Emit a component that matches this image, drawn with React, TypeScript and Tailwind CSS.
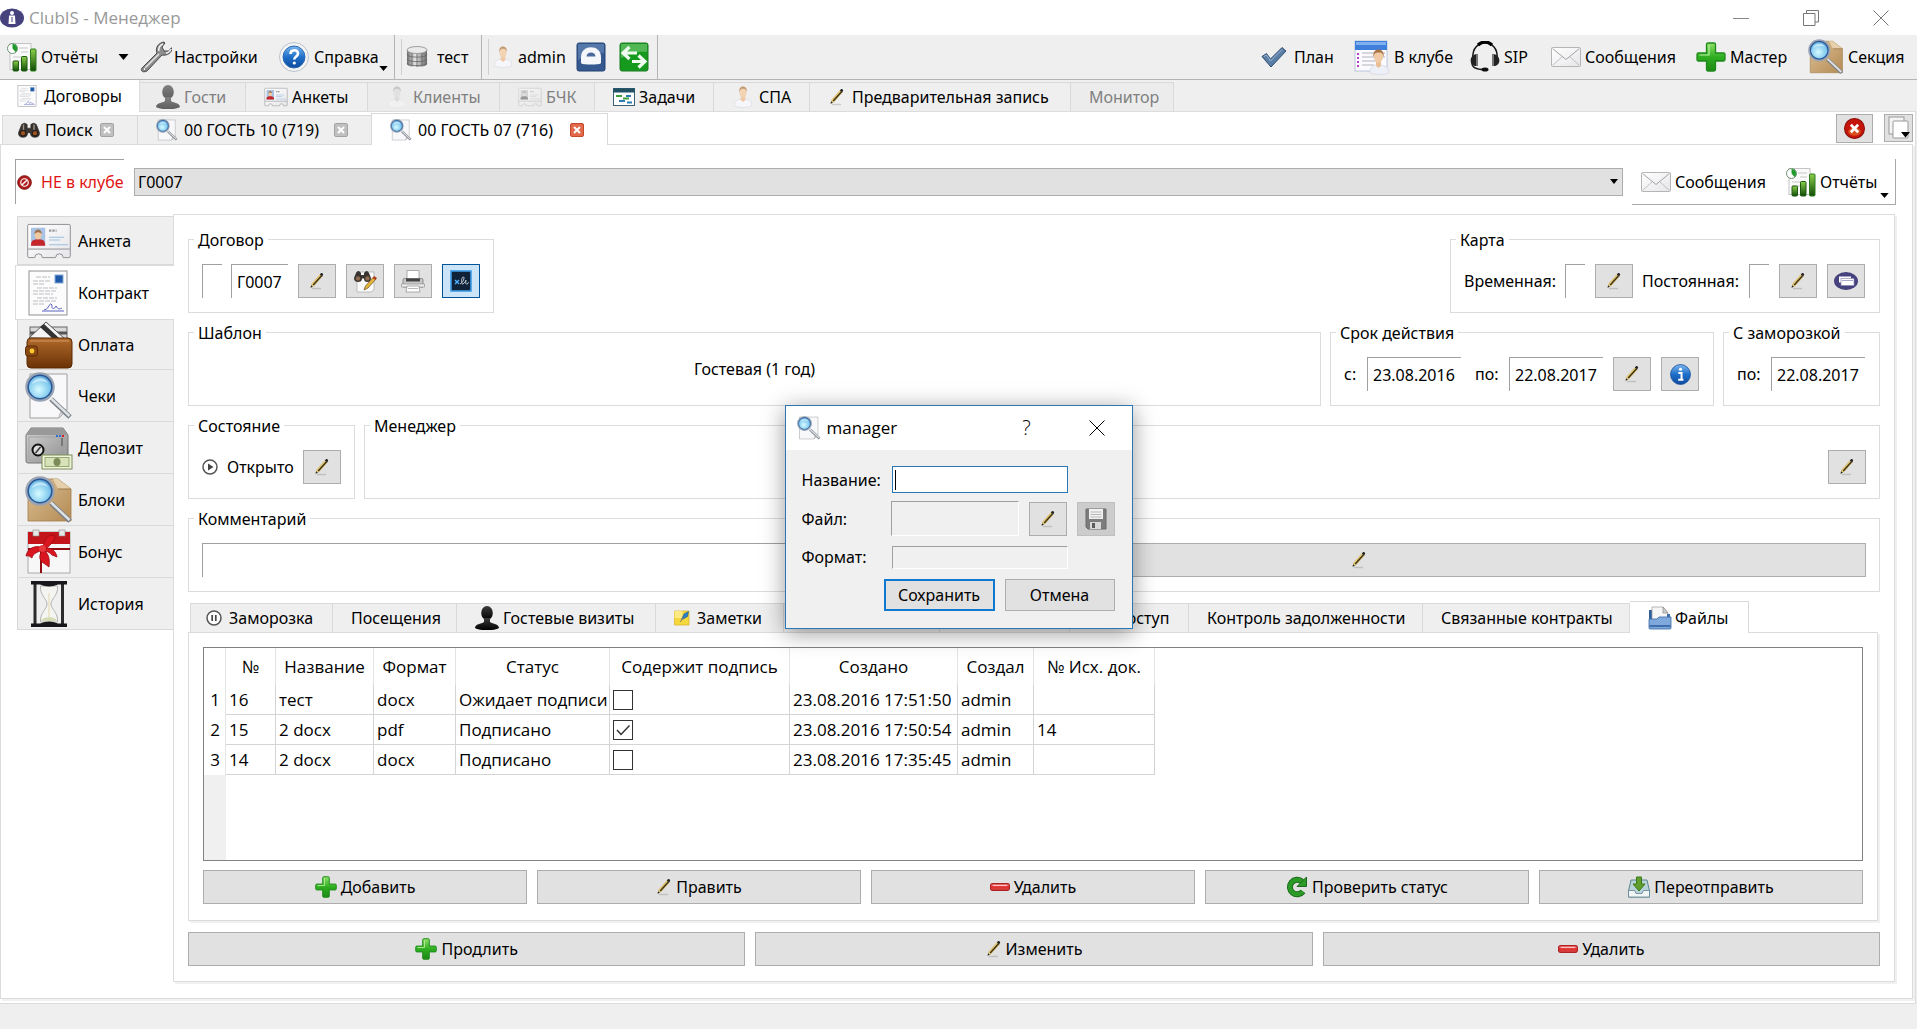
import React from "react";

type IconProps = { className?: string };

/* ---------- icons ---------- */

function Defs() {
  return (
    <svg className="absolute h-0 w-0" aria-hidden="true">
      <defs>
        <linearGradient id="gGreen" x1="0" y1="0" x2="0" y2="1">
          <stop offset="0" stopColor="#8fe06a" />
          <stop offset="0.5" stopColor="#2fae22" />
          <stop offset="1" stopColor="#1d8a14" />
        </linearGradient>
        <linearGradient id="gBar" x1="0" y1="0" x2="0" y2="1">
          <stop offset="0" stopColor="#8ccf4a" />
          <stop offset="1" stopColor="#0f4a08" />
        </linearGradient>
        <linearGradient id="gRed" x1="0" y1="0" x2="0" y2="1">
          <stop offset="0" stopColor="#f59a9a" />
          <stop offset="0.5" stopColor="#e02f2f" />
          <stop offset="1" stopColor="#d84a4a" />
        </linearGradient>
        <linearGradient id="gBlue" x1="0" y1="0" x2="0" y2="1">
          <stop offset="0" stopColor="#7db7ee" />
          <stop offset="0.5" stopColor="#1f6fc9" />
          <stop offset="1" stopColor="#0d4a9e" />
        </linearGradient>
        <linearGradient id="gPaper" x1="0" y1="0" x2="1" y2="1">
          <stop offset="0" stopColor="#ffffff" />
          <stop offset="1" stopColor="#e6e6ea" />
        </linearGradient>
        <linearGradient id="gMetal" x1="0" y1="0" x2="1" y2="0">
          <stop offset="0" stopColor="#6f6f6f" />
          <stop offset="0.4" stopColor="#e4e4e4" />
          <stop offset="1" stopColor="#6a6a6a" />
        </linearGradient>
        <radialGradient id="gLens" cx="0.45" cy="0.6" r="0.7">
          <stop offset="0" stopColor="#d6fbff" />
          <stop offset="0.6" stopColor="#7cc6ee" />
          <stop offset="1" stopColor="#2c62a6" />
        </radialGradient>
        <linearGradient id="gBox" x1="0" y1="0" x2="1" y2="1">
          <stop offset="0" stopColor="#dcc096" />
          <stop offset="1" stopColor="#b48b54" />
        </linearGradient>
        <linearGradient id="gWallet" x1="0" y1="0" x2="0" y2="1">
          <stop offset="0" stopColor="#b06a2c" />
          <stop offset="1" stopColor="#6b3205" />
        </linearGradient>
        <linearGradient id="gSafe" x1="0" y1="0" x2="1" y2="1">
          <stop offset="0" stopColor="#d2d2d2" />
          <stop offset="1" stopColor="#8e8e8e" />
        </linearGradient>
        <linearGradient id="gGuest" x1="0" y1="0" x2="0" y2="1">
          <stop offset="0" stopColor="#3a3a3a" />
          <stop offset="1" stopColor="#000000" />
        </linearGradient>
      </defs>
    </svg>
  );
}

function AppIcon({ className }: IconProps) {
  return (
    <svg viewBox="0 0 24 20" className={className}>
      <ellipse cx="12" cy="10" rx="12" ry="9.5" fill="#45427e" />
      <circle cx="12" cy="5" r="2" fill="#fff" />
      <path d="M9 7.5h6l0.500 8.500H8.500z" fill="#fff" />
      <path d="M12 9v5" stroke="#45427e" />
    </svg>
  );
}
function ReportsIcon({ className }: IconProps) {
  return (
    <svg viewBox="0 0 30 30" className={className}>
      <rect x="3" y="1.5" width="21" height="26" fill="#fafafa" stroke="#c4c4c4" />
      <path d="M12 6h9M14 10h7M6 15h13M6 19h8M6 23h6" stroke="#c8c8c8" strokeWidth="1.2" />
      <circle cx="5.5" cy="6.5" r="5" fill="#fff" stroke="#6f8f6f" />
      <path d="M5.5 6.5V2a4.500 4.500 0 0 1 3 8z" fill="#1f9a2c" />
      <rect x="6" y="19" width="5.5" height="10" rx="1" fill="url(#gBar)" stroke="#1c5a10" />
      <rect x="14.5" y="14.5" width="5.5" height="14.5" rx="1" fill="url(#gBar)" stroke="#1c5a10" />
      <rect x="23.5" y="7" width="5.5" height="22" rx="1" fill="url(#gBar)" stroke="#2c7a18" />
    </svg>
  );
}
function WrenchIcon({ className }: IconProps) {
  return (
    <svg viewBox="0 0 32 32" className={className}>
      <path d="M2 27 17 12c-2-5 1-10 7-11l1 1-3 4 2 4h5l2-3 1 0c0 5-5 8-10 7L7 30c-4 2-7 0-5-3z" fill="#8d8d8d" stroke="#4a4a4a" strokeWidth="1" />
      <path d="M5 27 19 13" stroke="#e8e8e8" strokeWidth="1.5" />
      <path d="M19 10c-1-3 1-6 4-7M26 12c2 0 4-2 5-4" stroke="#f2f2f2" strokeWidth="1.5" fill="none" />
      <circle cx="4.5" cy="28" r="1.3" fill="#fff" stroke="#444" strokeWidth="0.5" />
    </svg>
  );
}
function HelpIcon({ className }: IconProps) {
  return (
    <svg viewBox="0 0 30 30" className={className}>
      <circle cx="15" cy="15" r="14.5" fill="#f4f4f4" stroke="#b9c2cc" />
      <circle cx="15" cy="15" r="11" fill="url(#gBlue)" stroke="#2d6db8" />
      <path d="M11.500 12c0-5 7.500-5 7.500-0.500 0 3-3.700 3-3.700 6" fill="none" stroke="#fff" strokeWidth="2.6" />
      <circle cx="15.3" cy="21" r="1.6" fill="#fff" />
    </svg>
  );
}
function DbIcon({ className }: IconProps) {
  return (
    <svg viewBox="0 0 22 22" className={className}>
      <path d="M1 4v14c0 4 20 4 20 0V4z" fill="url(#gMetal)" />
      <ellipse cx="11" cy="4" rx="10" ry="3.5" fill="#e9e9e9" stroke="#8b8b8b" strokeWidth="0.8" />
      <path d="M1 8.500c0 3.500 20 3.500 20 0M1 13c0 3.500 20 3.500 20 0M1 17c0 3.500 20 3.500 20 0M6 7v13M11 8v13M16 7v13" fill="none" stroke="#666" strokeWidth="0.8" />
    </svg>
  );
}
function PersonIcon({ className }: IconProps) {
  return (
    <svg viewBox="0 0 18 22" className={className}>
      <path d="M0.500 20c-1-5 3-6 6-7h5c3 1 7 2 6 7-4 2-13 2-17 0z" fill="#f6f7fb" stroke="#dcdde6" strokeWidth="0.8" />
      <path d="M7 10h4l0.500 4L9 16l-2.500-2z" fill="#eec9a4" />
      <ellipse cx="9" cy="6.500" rx="3.600" ry="5" fill="#f3d4b2" />
      <path d="M5.200 6c-0.500-4 1.800-5.500 3.800-5.500s4.300 1.500 3.800 5.500c-1-3-2-3.300-3.800-3.300S6.200 3 5.200 6z" fill="#c09a74" />
    </svg>
  );
}
function LockIcon({ className }: IconProps) {
  return (
    <svg viewBox="0 0 30 30" className={className}>
      <rect x="1" y="1" width="28" height="28" rx="2" fill="#35588f" stroke="#234274" />
      <path d="M2 2h26v9C18 10 10 12 2 18z" fill="#6585b5" opacity="0.7" />
      <path d="M5 21v-6C5 2 25 2 25 15v6c0 2-20 2-20 0z" fill="#f4f6fa" />
      <path d="M10.500 14.500c0-5.500 9-5.500 9 0z" fill="#4a6a9f" />
    </svg>
  );
}
function SwapIcon({ className }: IconProps) {
  return (
    <svg viewBox="0 0 30 30" className={className}>
      <rect x="1" y="1" width="28" height="28" rx="2" fill="#169a1e" stroke="#1c7a22" />
      <path d="M2 2h26v8C18 9 10 12 2 16z" fill="#6cc36c" opacity="0.7" />
      <path d="M10.500 5 4 11l6.500 6M4.500 11H18M19.500 13.500 26 19.500l-6.500 6M25.500 19.500H13" fill="none" stroke="#f0fbf0" strokeWidth="3.200" />
    </svg>
  );
}
function CheckIcon({ className }: IconProps) {
  return (
    <svg viewBox="0 0 26 22" className={className}>
      <path d="M1 10.500 5.500 7.500 9.500 13 21 1.500 25 5 10 21z" fill="#5b7ea6" stroke="#33506f" />
      <path d="M3 10.500 5.500 9 9.500 15 21 3.500" fill="none" stroke="#9ab6d2" />
    </svg>
  );
}
function InClubIcon({ className }: IconProps) {
  return (
    <svg viewBox="0 0 36 36" className={className}>
      <rect x="1" y="2" width="32" height="30" fill="#fbfbff" stroke="#b9c4dd" />
      <rect x="1" y="2" width="32" height="9" fill="#3f7fdc" />
      <path d="M2 3h30v3H2z" fill="#7fb0f2" />
      <path d="M8 14h23M8 18h23M8 22h14M8 26h12" stroke="#b0b0b8" />
      <path d="M4 14v2M4 18v2M4 22v2M4 26v2" stroke="#b240c0" strokeWidth="2" />
      <path d="M16 34c-1-6 3-7 6-8h5c4 1 8 2 8 8-4 2-15 2-19 0z" fill="#eef0f7" stroke="#d2d4de" strokeWidth="0.7" />
      <path d="M22 22h5v5l-2.500 2-2.500-2z" fill="#e9bf97" />
      <ellipse cx="24.5" cy="17.5" rx="4.6" ry="6" fill="#f0cba6" />
      <path d="M19.500 18c-1-5 2-7.500 5-7.500s6 2.500 5 7.500c-1-4-2-4.500-5-4.500s-4 0.500-5 4.500z" fill="#a87445" />
    </svg>
  );
}
function HeadsetIcon({ className }: IconProps) {
  return (
    <svg viewBox="0 0 32 32" className={className}>
      <path d="M4 17C2 -3 30 -3 28 17" fill="none" stroke="#111" strokeWidth="1.500" />
      <path d="M9 4c4-4 10-4 14 0" fill="none" stroke="#000" strokeWidth="3.200" />
      <path d="M8 13v12c-8 1-9-11 0-12zM24 13v12c8 1 9-11 0-12z" fill="#222" />
      <path d="M8 13v12M24 13v12" stroke="#777" strokeWidth="2" />
      <path d="M3 22c0 5 6 6.500 12 6.500" fill="none" stroke="#222" strokeWidth="1.5" />
      <ellipse cx="16" cy="28.500" rx="3.5" ry="2" fill="#111" />
    </svg>
  );
}
function MailIcon({ className }: IconProps) {
  return (
    <svg viewBox="0 0 30 20" className={className}>
      <rect x="0.5" y="0.5" width="29" height="19" rx="1" fill="url(#gPaper)" stroke="#b5b5b5" />
      <path d="M1.500 18.500 11.500 9.500M28.500 18.500 18.500 9.500" stroke="#c0c0c0" fill="none" />
      <path d="M1.500 1.500 15 12.500 28.500 1.500" stroke="#a4a4a8" fill="none" />
    </svg>
  );
}
function PlusIcon({ className }: IconProps) {
  return (
    <svg viewBox="0 0 30 30" className={className}>
      <path d="M12 1h6q1.500 0 1.500 1.500V11H27.500Q29 11 29 12.500v5Q29 19 27.500 19H19.500v8.500q0 1.500-1.500 1.500h-6q-1.500 0-1.500-1.500V19H2.500Q1 19 1 17.500v-5Q1 11 2.500 11h8V2.500Q10.500 1 12 1z" fill="url(#gGreen)" stroke="#1d8a1a" strokeWidth="1.3" />
      <path d="M13 3v10H3.500" fill="none" stroke="#b6f09c" strokeWidth="1.2" />
    </svg>
  );
}
function MinusIcon({ className }: IconProps) {
  return (
    <svg viewBox="0 0 20 8" className={className}>
      <rect x="0.600" y="0.600" width="18.800" height="6.800" rx="1.800" fill="url(#gRed)" stroke="#b02222" strokeWidth="1.200" />
      <path d="M3 2.500h14" stroke="#ffc0c0" />
    </svg>
  );
}
function Lens() {
  return (
    <>
      <path d="M26 27 45 45" stroke="#7a8088" strokeWidth="5" />
      <path d="M26 26.500 44.500 44" stroke="#dfe2e5" strokeWidth="2.500" />
      <circle cx="15" cy="15" r="13.500" fill="url(#gLens)" stroke="#98a4b4" strokeWidth="2.500" />
      <circle cx="15" cy="15" r="11.800" fill="none" stroke="#2b5694" strokeWidth="1.500" />
      <path d="M7 12C9 5 20 4 23 11 18 8 12 9 7 12z" fill="#e8f7ff" opacity="0.600" />
    </>
  );
}
function BoxSearchIcon({ className }: IconProps) {
  return (
    <svg viewBox="0 0 48 48" className={className}>
      <path d="M7 3h26l13 10v32H3V13z" fill="url(#gBox)" stroke="#a37f4d" strokeWidth="0.8" />
      <path d="M28 3h5l13 10H33z" fill="#e6d0ab" />
      <path d="M33 13h13" stroke="#9b7646" />
      <Lens />
    </svg>
  );
}
function PageSearchIcon({ className }: IconProps) {
  return (
    <svg viewBox="0 0 48 48" className={className}>
      <path d="M5 2h37v36l-8 8H5z" fill="#f8f8fa" stroke="#a0a0a4" />
      <path d="M42 38c-4-1-8 2-8 8z" fill="#d6d6da" stroke="#a8a8ac" strokeWidth="0.7" />
      <Lens />
    </svg>
  );
}
function DocIcon({ className }: IconProps) {
  return (
    <svg viewBox="0 0 40 46" className={className}>
      <rect x="1" y="1" width="38" height="44" fill="#fcfcfd" stroke="#8f8f94" />
      <rect x="27" y="5" width="8" height="8" fill="#1f5aa8" stroke="#86a8d6" />
      <path d="M8 7h14M5 11h18M5 14h12M9 18h20M5 21h24M5 24h20M9 28h20M5 31h24M5 34h12" stroke="#b6b6ba" strokeWidth="0.9" strokeDasharray="5 1" />
      <path d="M14 41h22M16 40c6-1 5-9 8-5-1 5 3 4 4 1 2 4 4 3 6 2" fill="none" stroke="#5a62c0" strokeWidth="1" />
    </svg>
  );
}
function CardIcon({ className }: IconProps) {
  return (
    <svg viewBox="0 0 48 38" className={className}>
      <path d="M3 1.500h42q1.500 0 1.500 1.500v32q0 1.500-1.500 1.500h-6q0-4-4-4t-4 4H17q0-4-4-4t-4 4H3q-1.500 0-1.500-1.500V3q0-1.500 1.500-1.500z" fill="url(#gPaper)" stroke="#8d8d92" />
      <rect x="5" y="5" width="15" height="19" fill="#a9c3e6" />
      <path d="M5 24c0-7 4-6 7.500-7 4 1 7.500 0 7.500 7z" fill="#c4262b" />
      <ellipse cx="12.500" cy="12.500" rx="3.600" ry="5" fill="#efc9a2" />
      <path d="M8.500 12c0-7 8-7 8 0-2-3-6-3-8 0z" fill="#9d7450" />
      <path d="M24 8h8" stroke="#9a9a9a" strokeWidth="2.5" strokeDasharray="2.5 1" />
      <path d="M24 15h16M24 18h12M24 23h20" stroke="#9dbfdf" strokeWidth="1.2" />
      <path d="M2 27.500h44" stroke="#8d8d92" />
    </svg>
  );
}
function WalletIcon({ className }: IconProps) {
  return (
    <svg viewBox="0 0 48 48" className={className}>
      <rect x="5" y="6" width="37" height="14" fill="#d9d9d9" stroke="#666" />
      <path d="M5 12h37" stroke="#555" strokeWidth="3" />
      <path d="M4 17 21 1 40 18z" fill="#f4f4f4" stroke="#555" />
      <path d="M15 6 27 17h7L19 3z" fill="#333" />
      <path d="M6 17q-4 0-4 4v22q0 4 4 4h37q4 0 4-4V21q0-4-4-4z" fill="url(#gWallet)" stroke="#5a2a05" />
      <path d="M5 20h39" stroke="#d49a62" />
      <rect x="0.500" y="25" width="12" height="10" rx="2.500" fill="#8a4812" stroke="#5a2a05" />
      <circle cx="7" cy="30" r="2.400" fill="#f7cb2e" />
    </svg>
  );
}
function SafeIcon({ className }: IconProps) {
  return (
    <svg viewBox="0 0 48 48" className={className}>
      <path d="M6 4h32l5 7v26q0 2-2 2H3q-2 0-2-2V11z" fill="url(#gSafe)" stroke="#777" />
      <path d="M6 4h32l5 7H1z" fill="#999" />
      <rect x="4" y="13" width="36" height="23" fill="none" stroke="#a4a4a4" />
      <path d="M31 12h2M34 12h2" stroke="#2d6fd2" strokeWidth="2" />
      <path d="M37 12h2" stroke="#d22" strokeWidth="2" />
      <circle cx="13" cy="26" r="5.500" fill="#ddd" stroke="#111" strokeWidth="2" />
      <path d="M10.500 29 15.500 23" stroke="#333" strokeWidth="1.500" />
      <path d="M37 14v8" stroke="#777" strokeWidth="2" />
      <rect x="17" y="31" width="30" height="14" fill="#eef4da" stroke="#7c8c58" />
      <rect x="20" y="33.500" width="24" height="9" fill="#d8e2b8" stroke="#98a874" />
      <ellipse cx="32" cy="38" rx="3.500" ry="4" fill="#7c8c58" />
    </svg>
  );
}
function BonusIcon({ className }: IconProps) {
  return (
    <svg viewBox="0 0 48 48" className={className}>
      <rect x="3" y="4" width="42" height="41" fill="#f7f7f7" stroke="#aaa" />
      <rect x="3" y="4" width="42" height="12" fill="#c4141b" />
      <path d="M3 21h42M16 21v24" stroke="#8e0c12" strokeWidth="2" />
      <rect x="8" y="2" width="6" height="6" fill="#e6e6e6" stroke="#888" strokeWidth="0.6" />
      <rect x="34" y="2" width="6" height="6" fill="#e6e6e6" stroke="#888" strokeWidth="0.6" />
      <path d="M18 20C10 16 2 21 1 28c3-1 4 1 6 2 1-5 6-6 11-8zM18 20c1-9 6-15 12-12-1 5-5 11-12 14zM18 21c6-3 13 1 14 8l-5-2c-3-3-5-4-9-4zM18 21c6 5 7 10 6 18l-4-3c-6-3-7-8-2-15z" fill="#d9161f" stroke="#9b0c13" strokeWidth="0.8" />
      <circle cx="17.500" cy="20.500" r="3.500" fill="#e8373d" />
    </svg>
  );
}
function HourglassIcon({ className }: IconProps) {
  return (
    <svg viewBox="0 0 36 46" className={className}>
      <path d="M4 2v42M31.500 2v42" stroke="#2b2b2b" strokeWidth="3" />
      <path d="M9.500 5c-1 9 6.500 13 6.500 18s-7.500 9-6.500 18h17c1-9-6.500-13-6.500-18s7.500-9 6.500-18z" fill="#f4f4f0" stroke="#b4b4b4" />
      <path d="M18 12v26" stroke="#e4d6b0" />
      <path d="M10 40c2-5 14-5 16 0z" fill="#d5dbb4" />
      <path d="M0 0h36v3.500H27q-9 4-18 0H0zM0 46h36v-3.500H27q-9-4-18 0H0z" fill="#17171c" />
    </svg>
  );
}
function GuestIcon({ className }: IconProps) {
  return (
    <svg viewBox="0 0 24 24" className={className}>
      <ellipse cx="12" cy="7" rx="5.800" ry="7" fill="url(#gGuest)" />
      <path d="M9 12h6v4c3 2 9 2 9 6-5 3-19 3-24 0 0-4 6-4 9-6z" fill="url(#gGuest)" />
    </svg>
  );
}
function TasksIcon({ className }: IconProps) {
  return (
    <svg viewBox="0 0 22 18" className={className}>
      <rect x="0.500" y="0.500" width="21" height="17" fill="#fff" stroke="#3b5f73" />
      <rect x="0.500" y="0.500" width="21" height="4" fill="#1f5063" />
      <path d="M3 8h6M10 10.500h6" stroke="#3fa03a" strokeWidth="2" />
      <path d="M6 13h6M13 8h5M14 14.500h5" stroke="#2a7fb0" strokeWidth="1.800" />
    </svg>
  );
}
function PencilIcon({ className }: IconProps) {
  return (
    <svg viewBox="0 0 16 18" className={className}>
      <path d="M3 16.500h9" stroke="#000" strokeOpacity="0.150" strokeWidth="1.400" />
      <path d="M2 15 3 11.500 11 2.500l2.200 2L5.300 13.500z" fill="#f0d277" stroke="#c4a654" strokeWidth="0.500" />
      <path d="M4.200 13 12.500 3.800" stroke="#3d3212" strokeWidth="1.500" />
      <path d="M10.800 2.500 12.200 1q1.800-0.300 2 1.500L13.200 4.500z" fill="#222" />
      <path d="M1.500 15.700 2.200 13.300 3.800 14.700z" fill="#222" />
    </svg>
  );
}
function BinocularsIcon({ className }: IconProps) {
  return (
    <svg viewBox="0 0 24 18" className={className}>
      <path d="M4 3q3-3 6 0v4h4V3q3-3 6 0l3.500 9q0 5-5 5t-5-5h-3q0 5-5 5t-5-5z" fill="#3a3430" stroke="#1a1614" strokeWidth="0.600" />
      <path d="M6 3v6M17.500 3v6" stroke="#99928c" strokeWidth="1.500" />
      <circle cx="5.500" cy="12.500" r="3" fill="#9a5524" stroke="#111" />
      <circle cx="18.500" cy="12.500" r="3" fill="#9a5524" stroke="#111" />
    </svg>
  );
}
function FindEditIcon({ className }: IconProps) {
  return (
    <svg viewBox="0 0 24 24" className={className}>
      <path d="M4 3h17v18l-3 2H4z" fill="#fafafa" stroke="#aaa" strokeWidth="0.7" />
      <path d="M3 4q2-4 5 0v2h3V4q3-4 5 0l2 5q0 4-3.500 4T11 9.500H9Q9 13 5 13T1 9z" fill="#3a3430" />
      <circle cx="5" cy="9.500" r="2.200" fill="#8d6a50" />
      <circle cx="14.500" cy="9.500" r="2.200" fill="#8d6a50" />
      <path d="M11 21l1.500-4L20 8.500l2.500 2L15 19z" fill="#e3b63e" stroke="#6b4c10" strokeWidth="0.7" />
      <path d="M19.500 9 21 7l3 2-1.500 2z" fill="#b33a22" />
    </svg>
  );
}
function PrinterIcon({ className }: IconProps) {
  return (
    <svg viewBox="0 0 24 24" className={className}>
      <path d="M6 1.500h12V11H6z" fill="#fff" stroke="#999" strokeWidth="0.800" />
      <path d="M2 11q0-1.500 1.500-1.500h17Q22 9.500 22 11v7H2z" fill="#c8c8c8" stroke="#777" strokeWidth="0.800" />
      <path d="M5 9.500h14v3H5z" fill="#444" />
      <path d="M0.500 15h23v3h-23z" fill="#ededed" stroke="#888" strokeWidth="0.600" />
      <path d="M6 17h12l1 6H5z" fill="#fdfdfd" stroke="#999" strokeWidth="0.800" />
      <path d="M7 19.500h10" stroke="#bbb" />
    </svg>
  );
}
function SignIcon({ className }: IconProps) {
  return (
    <svg viewBox="0 0 22 22" className={className}>
      <rect x="1" y="1" width="20" height="20" fill="#0f2238" stroke="#3d9be6" strokeWidth="1.600" />
      <path d="M5 10l4 4M9 10l-4 4" stroke="#4fb0ff" strokeWidth="1.400" />
      <path d="M10 14c4-2 5-8 3-7s-2 8 0 7 3-4 3-4-1 5 1 4 1-1 2-2" fill="none" stroke="#cfd8e2" strokeWidth="0.900" />
    </svg>
  );
}
function CardsIcon({ className }: IconProps) {
  return (
    <svg viewBox="0 0 24 18" className={className}>
      <ellipse cx="12" cy="9" rx="12" ry="9" fill="#45427e" />
      <path d="M5 4.500h12v6H5z" fill="#fff" />
      <path d="M7 6.500h13V13.500H7z" fill="#fff" stroke="#8a88b4" strokeWidth="0.700" />
      <path d="M8 8.500h11" stroke="#a9a7cc" />
    </svg>
  );
}
function InfoIcon({ className }: IconProps) {
  return (
    <svg viewBox="0 0 20 20" className={className}>
      <circle cx="10" cy="10" r="9.500" fill="url(#gBlue)" stroke="#1a559f" strokeWidth="0.800" />
      <circle cx="10" cy="5" r="1.500" fill="#fff" />
      <path d="M8 8.500h3v6M7.800 15h5" stroke="#fff" strokeWidth="1.900" fill="none" />
    </svg>
  );
}
function StopIcon({ className }: IconProps) {
  return (
    <svg viewBox="0 0 16 16" className={className}>
      <circle cx="8" cy="8" r="7.300" fill="#b01c1c" stroke="#7e1010" />
      <circle cx="8" cy="8" r="4" fill="none" stroke="#fff" strokeWidth="1.300" />
      <path d="M5.500 10.500 10.500 5.500" stroke="#fff" strokeWidth="1.600" />
    </svg>
  );
}
function PlayIcon({ className }: IconProps) {
  return (
    <svg viewBox="0 0 16 16" className={className}>
      <circle cx="8" cy="8" r="7" fill="#fff" stroke="#555" strokeWidth="1.500" />
      <path d="M6 4.500 11.500 8 6 11.500z" fill="#444" />
    </svg>
  );
}
function PauseIcon({ className }: IconProps) {
  return (
    <svg viewBox="0 0 16 16" className={className}>
      <circle cx="8" cy="8" r="7" fill="#fff" stroke="#555" strokeWidth="1.500" />
      <path d="M6.200 5v6M9.800 5v6" stroke="#444" strokeWidth="1.700" />
    </svg>
  );
}
function NoteIcon({ className }: IconProps) {
  return (
    <svg viewBox="0 0 16 16" className={className}>
      <path d="M0.500 1h14.500v14H0.500z" fill="#f7d83c" stroke="#d8b21c" strokeWidth="0.700" />
      <path d="M0.500 1h8v7h-8z" fill="#fbe983" />
      <path d="M7.500 9.500 10 4l4.500-2.500-1 5-3.500 2z" fill="#2b7fc4" stroke="#1a5a96" strokeWidth="0.600" />
      <path d="M6 12 10 7" stroke="#777" />
    </svg>
  );
}
function FolderIcon({ className }: IconProps) {
  return (
    <svg viewBox="0 0 24 24" className={className}>
      <path d="M1 4h3v18H1z" fill="#2f5f9e" />
      <path d="M4 1h11l5 6v8H4z" fill="#f6f6f6" stroke="#999" strokeWidth="0.700" />
      <path d="M15 1v6h5z" fill="#cfcfcf" stroke="#888" strokeWidth="0.700" />
      <path d="M19 8h3v8h-3z" fill="#3c6fb0" />
      <path d="M1 13h8l2-2h12v11q0 1-1 1H2q-1 0-1-1z" fill="#7fa8dc" stroke="#3a6aa6" strokeWidth="0.800" />
      <path d="M1.500 20h21" stroke="#2c5c9c" strokeWidth="1.500" />
    </svg>
  );
}
function RefreshIcon({ className }: IconProps) {
  return (
    <svg viewBox="0 0 22 22" className={className}>
      <path d="M17 15.500A7.300 7.300 0 1 1 16 5.500" fill="none" stroke="#145f14" strokeWidth="6" />
      <path d="M17 15.500A7.300 7.300 0 1 1 16 5.500" fill="none" stroke="#2c9a26" strokeWidth="4.400" />
      <path d="M20.500 1v9.500H11z" fill="#2c9a26" stroke="#145f14" strokeWidth="0.900" />
    </svg>
  );
}
function InboxIcon({ className }: IconProps) {
  return (
    <svg viewBox="0 0 22 22" className={className}>
      <path d="M3 4h16l2.500 11v6H0.500v-6z" fill="#b9d2da" stroke="#5f8490" />
      <path d="M0.500 14.500h6l1.500 3h6l1.500-3h6V21H0.500z" fill="#f1f5f6" stroke="#5f8490" strokeWidth="0.800" />
      <path d="M8.500 1h5v7h3.500l-6 7-6-7h3.500z" fill="#5f9e2c" stroke="#3c7a18" />
    </svg>
  );
}
function SaveIcon({ className }: IconProps) {
  return (
    <svg viewBox="0 0 22 22" className={className}>
      <path d="M1 1h20v20H3l-2-2z" fill="#7c7c7c" stroke="#6a6a6a" />
      <rect x="4" y="1" width="14" height="10" fill="#f1f1f1" />
      <path d="M5.500 4h11M5.500 6.500h11M5.500 9h11" stroke="#b8b8b8" />
      <rect x="5" y="14" width="11" height="7" fill="#d8d8d8" />
      <rect x="7" y="15" width="3" height="5" fill="#5c5c5c" />
    </svg>
  );
}
function CloseAllIcon({ className }: IconProps) {
  return (
    <svg viewBox="0 0 20 20" className={className}>
      <circle cx="10" cy="10" r="9.500" fill="#c4150c" stroke="#8b0d08" />
      <ellipse cx="10" cy="13" rx="6" ry="4" fill="#e8742c" opacity="0.600" />
      <path d="M6.500 6.500 13.500 13.500M13.500 6.500 6.500 13.500" stroke="#fff" strokeWidth="2.600" />
    </svg>
  );
}
function PagesIcon({ className }: IconProps) {
  return (
    <svg viewBox="0 0 24 24" className={className}>
      <rect x="2" y="1" width="15" height="17" fill="#f4f4f4" stroke="#999" />
      <rect x="6" y="5" width="15" height="17" rx="1" fill="#fff" stroke="#999" />
      <path d="M14 16h9l-4.500 5.500z" fill="#000" />
    </svg>
  );
}
function TabClose({ active }: { active?: boolean }) {
  return (
    <button type="button" aria-label="Закрыть вкладку" className="ml-auto mr-[23px] shrink-0">
      <svg viewBox="0 0 14 14" className="size-[14px]">
        <rect x="0.500" y="0.500" width="13" height="13" rx="1.500" fill={active ? "#e4694a" : "#c0c0c0"} stroke={active ? "#c24a2e" : "#a2a2a2"} />
        <path d="M4 4 10 10M10 4 4 10" stroke="#fff" strokeWidth="2" />
      </svg>
    </button>
  );
}
function Down({ className }: IconProps) {
  return (
    <svg viewBox="0 0 10 6" className={className}>
      <path d="M0 0h10L5 6z" fill="#000" />
    </svg>
  );
}

/* ---------- shared pieces ---------- */

function ToolButton({ icon, label, className }: { icon: React.ReactNode; label: string; className: string }) {
  return (
    <button type="button" className={"flex h-full shrink-0 items-center whitespace-nowrap " + className}>
      {icon}
      <span>{label}</span>
    </button>
  );
}

function IconButton({ icon, label, className = "w-[38px] border-[#adadad] bg-[#e1e1e1]" }: { icon: React.ReactNode; label: string; className?: string }) {
  return (
    <button type="button" aria-label={label} className={"flex h-[34px] shrink-0 items-center justify-center border " + className}>
      {icon}
    </button>
  );
}

const pencil = <PencilIcon className="h-[18px] w-4" />;

function Sunken({ children, className }: { children?: React.ReactNode; className: string }) {
  return <div className={"flex h-[34px] shrink-0 items-center border-l border-t border-[#a0a0a0] whitespace-nowrap " + className}>{children}</div>;
}

function Group({ title, children, className }: { title: string; children: React.ReactNode; className: string }) {
  return (
    <fieldset className={"min-w-0 border border-[#dcdcdc] " + className}>
      <legend className="ml-[5px] h-5 px-1 leading-[22px]">{title}</legend>
      <div className="flex items-center px-[13px] pb-[14px] pt-[15px]">{children}</div>
    </fieldset>
  );
}

function WideButton({ icon, label }: { icon: React.ReactNode; label: string }) {
  return (
    <button type="button" className="flex h-[34px] flex-1 items-center justify-center gap-1 border border-[#adadad] bg-[#e1e1e1]">
      {icon}
      <span>{label}</span>
    </button>
  );
}

/* ---------- data ---------- */

const modules = [
  { label: "Гости", icon: <GuestIcon className="size-6 opacity-60" />, cls: "w-[106px] gap-1 pl-4", off: true },
  { label: "Анкеты", icon: <CardIcon className="h-5 w-6" />, cls: "w-[122px] gap-1 pl-[18px]" },
  { label: "Клиенты", icon: <PersonIcon className="h-[22px] w-[18px] opacity-50 grayscale" />, cls: "w-[132px] gap-[7px] pl-5", off: true },
  { label: "БЧК", icon: <CardIcon className="h-5 w-6 opacity-50 grayscale" />, cls: "w-[95px] gap-1 pl-[18px]", off: true },
  { label: "Задачи", icon: <TasksIcon className="h-[18px] w-[22px]" />, cls: "w-[119px] gap-1 pl-[18px]" },
  { label: "СПА", icon: <PersonIcon className="h-[22px] w-[18px]" />, cls: "w-[96px] gap-[7px] pl-5" },
  { label: "Предварительная запись", icon: <PencilIcon className="h-[18px] w-4" />, cls: "w-[261px] gap-[7px] pl-[19px]" },
  { label: "Монитор", icon: null, cls: "w-[103px] pl-[18px]", off: true },
];

const sections = [
  { label: "Анкета", icon: <CardIcon className="h-[36px] w-[46px]" />, cls: "ml-0.5 h-[49px] border-t" },
  { label: "Контракт", icon: <DocIcon className="h-[46px] w-10" />, active: true, cls: "" },
  { label: "Оплата", icon: <WalletIcon className="size-12" />, cls: "ml-0.5 h-[50px]" },
  { label: "Чеки", icon: <PageSearchIcon className="size-12" />, cls: "ml-0.5 h-[52px]" },
  { label: "Депозит", icon: <SafeIcon className="size-12" />, cls: "ml-0.5 h-[52px]" },
  { label: "Блоки", icon: <BoxSearchIcon className="size-12" />, cls: "ml-0.5 h-[52px]" },
  { label: "Бонус", icon: <BonusIcon className="size-12" />, cls: "ml-0.5 h-[52px]" },
  { label: "История", icon: <HourglassIcon className="h-[46px] w-9" />, cls: "ml-0.5 h-[52px]" },
];

const detailTabs = [
  { label: "Заморозка", icon: <PauseIcon className="size-4" />, cls: "w-[143px] gap-[7px] pl-[15px] border-l" },
  { label: "Посещения", icon: null, cls: "w-[124px] pl-[18px]" },
  { label: "Гостевые визиты", icon: <GuestIcon className="size-6" />, cls: "w-[199px] gap-1 pl-[18px]" },
  { label: "Заметки", icon: <NoteIcon className="size-4" />, cls: "w-[128px] gap-[7px] pl-[18px]" },
  { label: "", icon: null, cls: "w-[156px]" },
  { label: "", icon: null, cls: "w-[130px]" },
  { label: "Доступ", icon: null, cls: "w-[119px] pl-[45px]" },
  { label: "Контроль задолженности", icon: null, cls: "w-[234px] pl-[18px]" },
  { label: "Связанные контракты", icon: null, cls: "w-[207px] pl-[18px]" },
];

const columns = [
  { label: "№", cls: "w-[50px]" },
  { label: "Название", cls: "w-[98px]" },
  { label: "Формат", cls: "w-[82px]" },
  { label: "Статус", cls: "w-[154px]" },
  { label: "Содержит подпись", cls: "w-[180px]" },
  { label: "Создано", cls: "w-[168px]" },
  { label: "Создал", cls: "w-[76px]" },
  { label: "№ Исх. док.", cls: "w-[121px]" },
];

const rows = [
  { n: 1, id: "16", name: "тест", format: "docx", status: "Ожидает подписи", signed: false, created: "23.08.2016 17:51:50", by: "admin", src: "" },
  { n: 2, id: "15", name: "2 docx", format: "pdf", status: "Подписано", signed: true, created: "23.08.2016 17:50:54", by: "admin", src: "14" },
  { n: 3, id: "14", name: "2 docx", format: "docx", status: "Подписано", signed: false, created: "23.08.2016 17:35:45", by: "admin", src: "" },
];

/* ---------- page parts ---------- */

function TitleBar() {
  return (
    <header className="flex h-[35px] items-center bg-white text-[#999]">
      <AppIcon className="h-5 w-6" />
      <h1 className="ml-[5px] flex-1 font-['Open_Sans',sans-serif] text-[17px]">ClubIS - Менеджер</h1>
      <div className="flex items-center gap-[54px] pr-7">
        <button type="button" aria-label="Свернуть">
          <svg viewBox="0 0 16 16" className="size-4"><path d="M0 8.500h16" stroke="#888" /></svg>
        </button>
        <button type="button" aria-label="Восстановить">
          <svg viewBox="0 0 16 16" className="size-4" fill="none" stroke="#777"><path d="M0.500 3.500h11.500v12H0.500zM3.500 3.500V0.500h12v11.500H12" /></svg>
        </button>
        <button type="button" aria-label="Закрыть">
          <svg viewBox="0 0 16 16" className="size-4" stroke="#777"><path d="M0.500 0.500 15.500 15.500M15.500 0.500 0.500 15.500" /></svg>
        </button>
      </div>
    </header>
  );
}

function ToolBar() {
  return (
    <div className="flex h-[45px] items-center border-b border-[#b4b4b4]">
      <ToolButton className="w-[100px] gap-1 pl-[7px]" icon={<ReportsIcon className="size-[30px]" />} label="Отчёты" />
      <button type="button" aria-label="Список отчётов" className="flex w-[40px] justify-center pl-[6px]">
        <Down className="h-[6px] w-[11px]" />
      </button>
      <ToolButton className="w-[139px] gap-0.5" icon={<WrenchIcon className="size-8" />} label="Настройки" />
      <div className="relative h-full">
        <ToolButton className="w-[115px] gap-[5px]" icon={<HelpIcon className="size-[30px]" />} label="Справка" />
        <Down className="absolute bottom-2 right-[6px] h-[5px] w-[9px]" />
      </div>
      <div className="flex h-full items-center border-l border-[#b4b4b4] pl-[6px]">
        <span className="h-9 border-l border-[#cfcfcf]" />
        <ToolButton className="w-[79px] gap-[9px] pl-1" icon={<DbIcon className="size-[22px]" />} label="тест" />
      </div>
      <div className="flex h-full items-center border-l border-r border-[#b4b4b4] pl-[6px]">
        <span className="h-9 border-l border-[#cfcfcf]" />
        <ToolButton className="w-[87px] gap-[6px] pl-[5px]" icon={<PersonIcon className="h-[22px] w-[18px]" />} label="admin" />
        <button type="button" aria-label="Заблокировать"><LockIcon className="size-[30px]" /></button>
        <button type="button" aria-label="Сменить пользователя" className="ml-[13px] mr-2"><SwapIcon className="size-[30px]" /></button>
      </div>
      <div className="ml-auto flex h-full">
        <ToolButton className="w-[93px] gap-[7px]" icon={<CheckIcon className="h-[22px] w-[26px]" />} label="План" />
        <ToolButton className="w-[115px] gap-1" icon={<InClubIcon className="size-9" />} label="В клубе" />
        <ToolButton className="w-[82px] gap-[3px]" icon={<HeadsetIcon className="size-8" />} label="SIP" />
        <ToolButton className="w-[145px] gap-1" icon={<MailIcon className="h-5 w-[30px]" />} label="Сообщения" />
        <ToolButton className="w-[112px] gap-1" icon={<PlusIcon className="size-[30px]" />} label="Мастер" />
        <ToolButton className="w-[109px] gap-1" icon={<BoxSearchIcon className="size-9" />} label="Секция" />
      </div>
    </div>
  );
}

function ModuleTabs() {
  return (
    <nav className="flex h-[31px] items-end">
      <button type="button" className="z-10 -mb-px flex h-8 w-[140px] shrink-0 items-center gap-[7px] border-r border-[#dcdcdc] bg-white pl-[17px]">
        <DocIcon className="h-[22px] w-5" />
        <span>Договоры</span>
      </button>
      {modules.map((m) => (
        <button
          key={m.label}
          type="button"
          disabled={m.off}
          className={"flex h-[29px] shrink-0 items-center whitespace-nowrap border-r border-t border-[#d9d9d9] disabled:bg-[#ececec] disabled:text-[#808080] " + m.cls}
        >
          {m.icon}
          <span>{m.label}</span>
        </button>
      ))}
    </nav>
  );
}

function DocumentTabs() {
  return (
    <nav className="flex h-8 items-end pl-0.5">
      <div className="flex h-[29px] w-[136px] items-center border-l border-r border-t border-[#d9d9d9] bg-[#efefef] pl-[15px]">
        <button type="button" className="flex items-center gap-[5px]"><BinocularsIcon className="h-[18px] w-[22px]" />Поиск</button>
        <TabClose />
      </div>
      <div className="flex h-[29px] w-[233px] items-center border-t border-[#d9d9d9] bg-[#efefef] pl-[18px]">
        <button type="button" className="flex items-center gap-[6px]"><PageSearchIcon className="size-[22px]" />00 ГОСТЬ 10 (719)</button>
        <TabClose />
      </div>
      <div className="z-10 -mb-px flex h-8 w-[237px] items-center border-l border-r border-t border-[#d9d9d9] bg-white pl-[18px]">
        <button type="button" className="flex items-center gap-[6px]"><PageSearchIcon className="size-[22px]" />00 ГОСТЬ 07 (716)</button>
        <TabClose active />
      </div>
      <div className="mb-px ml-auto flex gap-[11px] pr-0.5">
        <button type="button" aria-label="Закрыть все" className="flex h-[29px] w-[37px] items-center justify-center border border-[#adadad] bg-[#e1e1e1]">
          <CloseAllIcon className="size-[21px]" />
        </button>
        <button type="button" aria-label="Список вкладок" className="flex h-7 w-[29px] items-center justify-center border border-[#adadad] bg-[#e1e1e1]">
          <PagesIcon className="size-6" />
        </button>
      </div>
    </nav>
  );
}

function ClientBar() {
  return (
    <div className="flex h-[46px] items-start">
      <div className="flex h-[45px] w-[109px] shrink-0 items-center gap-[9px] whitespace-nowrap border-l border-t border-[#a0a0a0] pl-px text-[#e01414]">
        <StopIcon className="size-[15px]" />
        <span>НЕ в клубе</span>
      </div>
      <div className="relative ml-[10px] mt-[9px] flex-1">
        <select aria-label="Номер договора" className="block h-[28px] w-full appearance-none border border-[#adadad] bg-[#e1e1e1] pl-[3px]">
          <option>Г0007</option>
        </select>
        <Down className="pointer-events-none absolute right-[5px] top-[11px] h-[5px] w-[8px]" />
      </div>
      <div className="relative ml-[9px] flex h-[46px] w-[264px] shrink-0 border-b border-r border-[#a8a8a8]">
        <ToolButton className="w-[154px] gap-1 pl-[9px]" icon={<MailIcon className="h-5 w-[30px]" />} label="Сообщения" />
        <ToolButton className="gap-1" icon={<ReportsIcon className="size-[30px]" />} label="Отчёты" />
        <Down className="absolute bottom-[6px] right-[6px] h-[5px] w-[9px]" />
      </div>
    </div>
  );
}

function SideTabs() {
  return (
    <nav className="flex w-[158px] shrink-0 flex-col pt-0.5">
      {sections.map((s) =>
        s.active ? (
          <button key={s.label} type="button" className="z-10 -mr-px flex h-[55px] items-center border border-r-0 border-[#dcdcdc] bg-white">
            <span className="flex w-[62px] justify-center pl-0.5">{s.icon}</span>
            <span>{s.label}</span>
          </button>
        ) : (
          <button key={s.label} type="button" className={"flex items-center border-b border-l border-[#d9d9d9] bg-[#efefef] " + s.cls}>
            <span className="flex w-[60px] justify-center pl-0.5">{s.icon}</span>
            <span>{s.label}</span>
          </button>
        )
      )}
    </nav>
  );
}

function ContractFields() {
  return (
    <div className="flex flex-col gap-[9px]">
      <div className="flex justify-between">
        <Group title="Договор" className="w-[306px]">
          <Sunken className="w-[20px]" />
          <Sunken className="ml-[9px] w-[57px] pl-[5px]">Г0007</Sunken>
          <div className="ml-[10px] flex gap-[10px]">
            <IconButton icon={pencil} label="Изменить номер" />
            <IconButton icon={<FindEditIcon className="size-6" />} label="Найти" />
            <IconButton icon={<PrinterIcon className="size-6" />} label="Печать" />
            <IconButton icon={<SignIcon className="size-[22px]" />} label="Подпись" className="w-[38px] border-[#005499] bg-[#cce4f7]" />
          </div>
        </Group>
        <Group title="Карта" className="w-[430px]">
          <span className="w-[101px] shrink-0">Временная:</span>
          <Sunken className="w-[20px]" />
          <div className="ml-[10px]"><IconButton icon={pencil} label="Изменить временную карту" /></div>
          <span className="ml-[9px] w-[107px] shrink-0">Постоянная:</span>
          <Sunken className="w-[20px]" />
          <div className="ml-[10px] flex gap-[10px]">
            <IconButton icon={pencil} label="Изменить постоянную карту" />
            <IconButton icon={<CardsIcon className="h-[18px] w-6" />} label="Карты" />
          </div>
        </Group>
      </div>

      <div className="flex gap-[9px]">
        <Group title="Шаблон" className="flex-1">
          <p className="h-[34px] flex-1 text-center">Гостевая (1 год)</p>
        </Group>
        <Group title="Срок действия" className="w-[384px]">
          <span className="w-[23px] shrink-0">с:</span>
          <Sunken className="w-[94px] pl-[5px]">23.08.2016</Sunken>
          <span className="ml-[14px] w-[34px] shrink-0">по:</span>
          <Sunken className="w-[94px] pl-[5px]">22.08.2017</Sunken>
          <div className="ml-[10px] flex gap-[10px]">
            <IconButton icon={pencil} label="Изменить срок" />
            <IconButton icon={<InfoIcon className="size-[21px]" />} label="Сведения" />
          </div>
        </Group>
        <Group title="С заморозкой" className="w-[157px]">
          <span className="w-[34px] shrink-0">по:</span>
          <Sunken className="w-[94px] pl-[5px]">22.08.2017</Sunken>
        </Group>
      </div>

      <div className="flex gap-[9px]">
        <Group title="Состояние" className="w-[167px]">
          <PlayIcon className="size-4 shrink-0" />
          <span className="ml-[9px] w-[76px] shrink-0">Открыто</span>
          <IconButton icon={pencil} label="Изменить состояние" />
        </Group>
        <Group title="Менеджер" className="flex-1">
          <span className="flex-1" />
          <IconButton icon={pencil} label="Изменить менеджера" />
        </Group>
      </div>

      <Group title="Комментарий" className="">
        <Sunken className="mr-[10px] w-[calc(39%-8px)]" />
        <IconButton icon={pencil} label="Изменить комментарий" className="flex-1 border-[#adadad] bg-[#e1e1e1]" />
      </Group>
    </div>
  );
}

function FilesTable() {
  const cell = "border-b border-r border-[#d4d4d4] pl-[3px] text-left font-normal";
  return (
    <div className="flex h-[214px] border border-[#828282] bg-white font-['Open_Sans',sans-serif] text-[17px]">
      <div className="flex flex-1 flex-col">
        <table className="w-0 table-fixed border-separate border-spacing-0 whitespace-nowrap">
          <thead>
            <tr className="h-[37px]">
              <th className="w-[22px] border-r border-[#e4e4e4]" />
              {columns.map((c) => (
                <th key={c.label} className={"border-r border-[#e4e4e4] text-center font-normal " + c.cls}>{c.label}</th>
              ))}
            </tr>
          </thead>
          <tbody>
            {rows.map((r) => (
              <tr key={r.n} className="h-[30px]">
                <th className="border-r border-[#e4e4e4] pr-[5px] text-right font-normal">{r.n}</th>
                <td className={cell}>{r.id}</td>
                <td className={cell}>{r.name}</td>
                <td className={cell}>{r.format}</td>
                <td className={cell}>{r.status}</td>
                <td className={cell}>
                  <span className="grid size-5 place-items-center">
                    <input type="checkbox" defaultChecked={r.signed} aria-label="Содержит подпись" className="peer col-start-1 row-start-1 size-5 appearance-none border border-[#333] bg-white" />
                    <svg viewBox="0 0 20 20" className="pointer-events-none invisible col-start-1 row-start-1 size-5 peer-checked:visible">
                      <path d="M4 10 8 14.500 16.500 5.500" fill="none" stroke="#333" strokeWidth="1.500" />
                    </svg>
                  </span>
                </td>
                <td className={cell}>{r.created}</td>
                <td className={cell}>{r.by}</td>
                <td className={cell}>{r.src}</td>
              </tr>
            ))}
          </tbody>
        </table>
        <div className="w-[22px] flex-1 bg-[#f0f0f0]" />
      </div>
    </div>
  );
}

function Details() {
  return (
    <div>
      <nav className="flex h-[31px] items-end pl-0.5">
        {detailTabs.map((t, i) => (
          <button key={i} type="button" aria-label={t.label || "Вкладка"} className={"flex h-[29px] shrink-0 items-center whitespace-nowrap border-r border-t border-[#d9d9d9] bg-[#efefef] " + t.cls}>
            {t.icon}
            <span>{t.label}</span>
          </button>
        ))}
        <button type="button" className="z-10 -mb-px flex h-8 w-[119px] items-center gap-[3px] border-r border-t border-[#d9d9d9] bg-white pl-[18px]">
          <FolderIcon className="size-6" />
          <span>Файлы</span>
        </button>
      </nav>
      <div className="mr-0.5 border border-[#dcdcdc] px-[14px] pb-[16px] pt-[14px] shadow-[2px_2px_0_#f0f0f0]">
        <FilesTable />
        <div className="mt-[9px] flex gap-[10px]">
          <WideButton icon={<PlusIcon className="size-[22px]" />} label="Добавить" />
          <WideButton icon={pencil} label="Править" />
          <WideButton icon={<MinusIcon className="h-2 w-5" />} label="Удалить" />
          <WideButton icon={<RefreshIcon className="size-[22px]" />} label="Проверить статус" />
          <WideButton icon={<InboxIcon className="size-[22px]" />} label="Переотправить" />
        </div>
      </div>
    </div>
  );
}

function ManagerDialog() {
  return (
    <div role="dialog" aria-label="manager" className="absolute inset-x-0 top-[405px] z-20 mx-auto w-[348px] border border-[#2a77b8] bg-[#f0f0f0] pb-[17px] shadow-[0_4px_22px_rgba(0,0,0,0.4)]">
      <div className="flex h-[44px] items-center bg-white pl-[11px]">
        <PageSearchIcon className="size-6" />
        <h2 className="ml-[6px] flex-1 font-['Open_Sans',sans-serif] text-[17px]">manager</h2>
        <button type="button" aria-label="Справка" className="w-10 font-['Open_Sans',sans-serif] text-xl font-light">?</button>
        <button type="button" aria-label="Закрыть" className="ml-[42px] mr-[27px]">
          <svg viewBox="0 0 16 16" className="size-4" stroke="#000"><path d="M0.500 0.500 15.500 15.500M15.500 0.500 0.500 15.500" /></svg>
        </button>
      </div>
      <form className="flex flex-col pl-4 pr-[17px] pt-4" onSubmit={(e) => e.preventDefault()}>
        <div className="flex items-center">
          <label htmlFor="title" className="w-[90px]">Название:</label>
          <div className="relative">
            <input id="title" type="text" className="block h-[27px] w-[176px] border border-[#2a77b8] bg-white px-1 outline-none" />
            <span className="absolute left-[3px] top-[4px] h-5 w-px bg-black" />
          </div>
        </div>
        <div className="mt-[8px] flex items-center">
          <label htmlFor="file" className="w-[90px]">Файл:</label>
          <input id="file" readOnly className="h-[35px] w-[128px] border border-b-white border-l-[#a0a0a0] border-r-white border-t-[#a0a0a0] px-1 outline-none" />
          <div className="ml-[10px] flex gap-[10px]">
            <IconButton icon={pencil} label="Выбрать файл" />
            <IconButton icon={<SaveIcon className="size-[22px]" />} label="Сохранить файл" className="w-[38px] border-[#bfbfbf] bg-[#cccccc]" />
          </div>
        </div>
        <div className="mt-[9px] flex items-center">
          <label htmlFor="format" className="w-[90px]">Формат:</label>
          <input id="format" readOnly className="h-[23px] w-[176px] border border-b-white border-l-[#a0a0a0] border-r-white border-t-[#a0a0a0] px-1 outline-none" />
        </div>
        <div className="mt-[10px] flex justify-end gap-[10px]">
          <button type="submit" className="h-[32px] w-[111px] border-2 border-[#0f78d0] bg-[#e1e1e1]">Сохранить</button>
          <button type="button" className="h-[32px] w-[110px] border border-[#adadad] bg-[#e1e1e1]">Отмена</button>
        </div>
      </form>
    </div>
  );
}

export default function App() {
  return (
    <div className="relative flex min-h-screen flex-col bg-[#efefef] font-['Noto_Sans',sans-serif] text-base leading-6 text-black">
      <Defs />
      <TitleBar />
      <ToolBar />
      <ModuleTabs />
      <div className="mr-px border-b border-r border-t border-[#dcdcdc] bg-white pb-[4px]">
        <DocumentTabs />
        <main className="mr-0.5 border border-[#dcdcdc] pb-[16px] pl-[14px] pr-4 pt-[14px] shadow-[2px_2px_0_#f0f0f0]">
          <ClientBar />
          <div className="mt-[9px] flex">
            <SideTabs />
            <div className="mr-px flex min-w-0 flex-1 flex-col border border-[#dcdcdc] px-[14px] pb-[15px] pt-[14px] shadow-[2px_2px_0_#f0f0f0]">
              <ContractFields />
              <div className="mt-[9px]">
                <Details />
              </div>
              <div className="mt-[11px] flex gap-[10px]">
                <WideButton icon={<PlusIcon className="size-[22px]" />} label="Продлить" />
                <WideButton icon={pencil} label="Изменить" />
                <WideButton icon={<MinusIcon className="h-2 w-5" />} label="Удалить" />
              </div>
            </div>
          </div>
        </main>
      </div>
      <ManagerDialog />
    </div>
  );
}
